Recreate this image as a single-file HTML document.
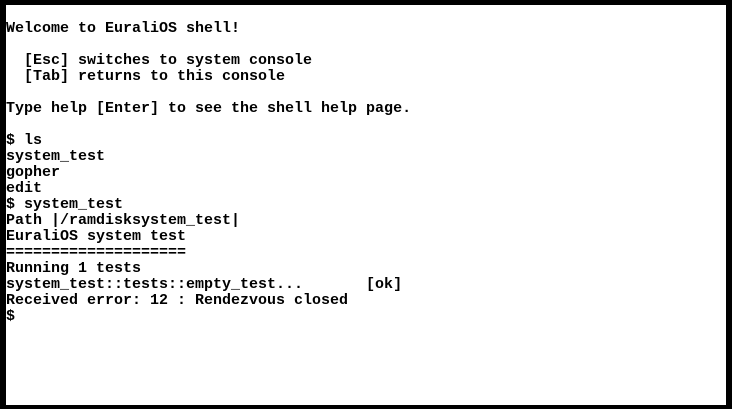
<!DOCTYPE html>
<html><head><style>
html,body{margin:0;padding:0;background:#000;width:732px;height:409px;overflow:hidden}
#s{position:absolute;left:6px;top:5px;width:720px;height:400px;background:#fff}
pre{position:absolute;left:6px;top:21px;margin:0;font-family:"Liberation Mono",monospace;font-weight:bold;font-size:15px;line-height:16px;color:#000;white-space:pre}
</style></head><body>
<div id="s"></div>
<pre>Welcome to EuraliOS shell!

  [Esc] switches to system console
  [Tab] returns to this console

Type help [Enter] to see the shell help page.

$ ls
system_test
gopher
edit
$ system_test
Path |/ramdisksystem_test|
EuraliOS system test
====================
Running 1 tests
system_test::tests::empty_test...       [ok]
Received error: 12 : Rendezvous closed
$</pre>
</body></html>
